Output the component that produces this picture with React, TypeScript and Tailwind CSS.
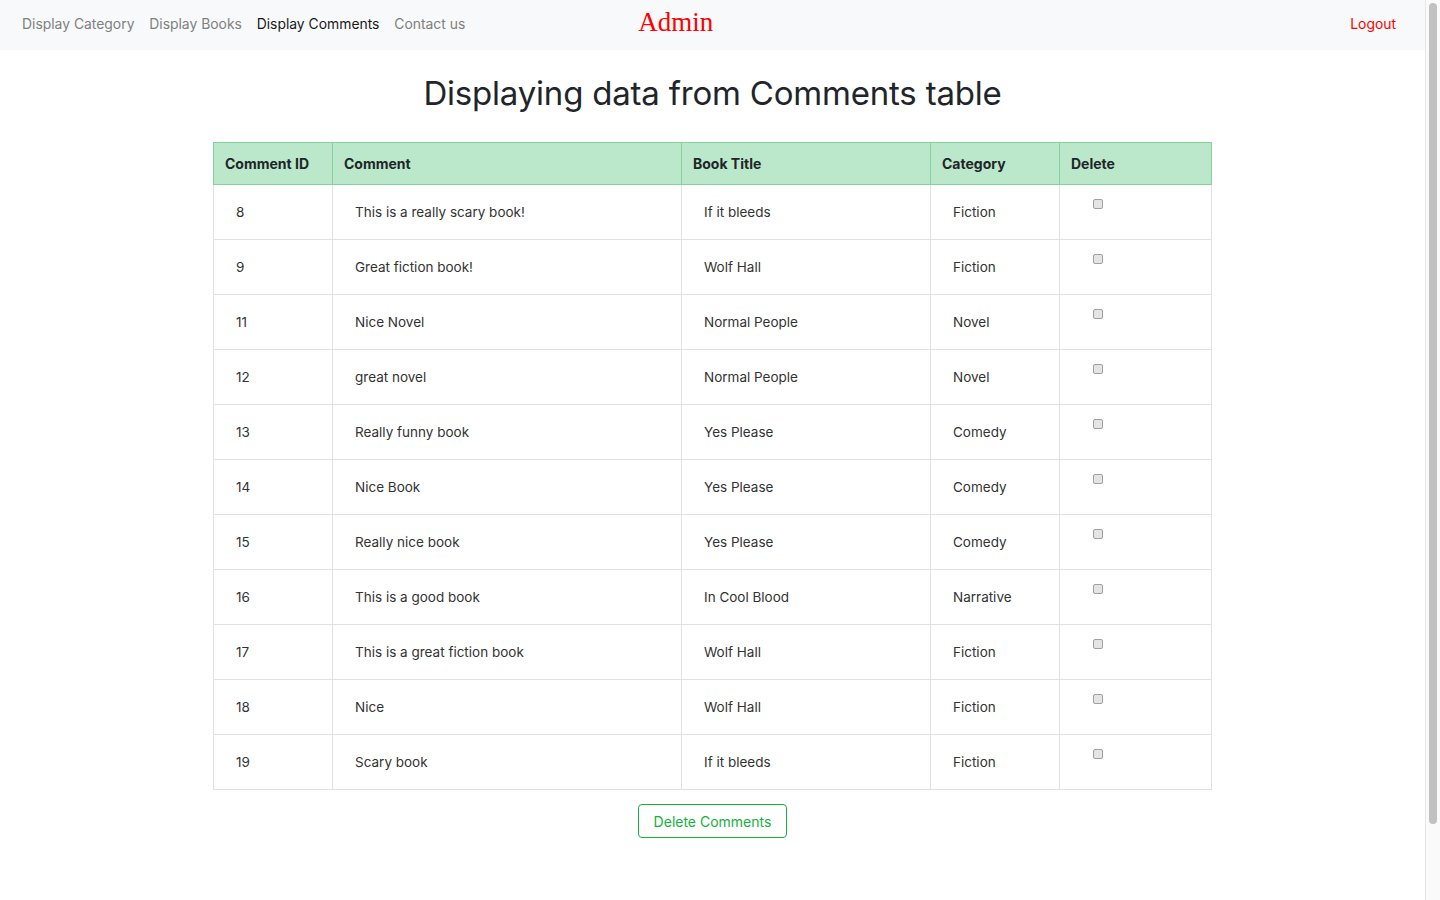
import React from "react";

type Row = {
  id: number;
  comment: string;
  title: string;
  category: string;
};

const rows: Row[] = [
  { id: 8, comment: "This is a really scary book!", title: "If it bleeds", category: "Fiction" },
  { id: 9, comment: "Great fiction book!", title: "Wolf Hall", category: "Fiction" },
  { id: 11, comment: "Nice Novel", title: "Normal People", category: "Novel" },
  { id: 12, comment: "great novel", title: "Normal People", category: "Novel" },
  { id: 13, comment: "Really funny book", title: "Yes Please", category: "Comedy" },
  { id: 14, comment: "Nice Book", title: "Yes Please", category: "Comedy" },
  { id: 15, comment: "Really nice book", title: "Yes Please", category: "Comedy" },
  { id: 16, comment: "This is a good book", title: "In Cool Blood", category: "Narrative" },
  { id: 17, comment: "This is a great fiction book", title: "Wolf Hall", category: "Fiction" },
  { id: 18, comment: "Nice", title: "Wolf Hall", category: "Fiction" },
  { id: 19, comment: "Scary book", title: "If it bleeds", category: "Fiction" },
];

const navLinks = [
  { label: "Display Category", active: false },
  { label: "Display Books", active: false },
  { label: "Display Comments", active: true },
  { label: "Contact us", active: false },
];

export default function App() {
  return (
    <div className="flex h-[900px] w-[1440px] overflow-hidden bg-white font-['Inter','Liberation_Sans',sans-serif] text-[#212529]">
      <div className="min-w-0 flex-1">
        {/* Navbar */}
        <nav className="flex h-[50px] items-center bg-[#f8f9fa] pb-[1px] pl-[22px] pr-[29px] text-[13.9px]">
          <div className="flex items-center gap-[14.8px]">
            {navLinks.map((link) => (
              <a
                key={link.label}
                href="#"
                className={link.active ? "text-[#1a1a1a]" : "text-[#808080]"}
              >
                {link.label}
              </a>
            ))}
          </div>
          <span className="ml-[173px] -mt-[4px] font-['Liberation_Serif',serif] text-[27px] text-[#ff0000]">
            Admin
          </span>
          <a href="#" className="ml-auto text-[#ff0000]">
            Logout
          </a>
        </nav>

        {/* Content */}
        <main className="flex flex-col items-center">
          <h1 className="mt-[20px] text-[33px] font-normal leading-[46px] tracking-[-0.2px] text-[#212529]">
            Displaying data from Comments table
          </h1>

          <table className="mt-[26px] w-[998px] table-fixed border-collapse text-[13.5px]">
            <colgroup>
              <col className="w-[119px]" />
              <col className="w-[349px]" />
              <col className="w-[249px]" />
              <col className="w-[129px]" />
              <col className="w-[152px]" />
            </colgroup>
            <thead>
              <tr className="h-[42px] bg-[#bbe8ca] text-left text-[14px]">
                {["Comment ID", "Comment", "Book Title", "Category", "Delete"].map((h) => (
                  <th
                    key={h}
                    className="border border-[#86d29c] px-[11px] font-bold text-[#212529]"
                  >
                    {h}
                  </th>
                ))}
              </tr>
            </thead>
            <tbody>
              {rows.map((row) => (
                <tr key={row.id} className="h-[55px]">
                  <td className="border border-[#dee2e6] px-[22px] text-[#333]">{row.id}</td>
                  <td className="border border-[#dee2e6] px-[22px] text-[#333]">{row.comment}</td>
                  <td className="border border-[#dee2e6] px-[22px] text-[#333]">{row.title}</td>
                  <td className="border border-[#dee2e6] px-[22px] text-[#333]">{row.category}</td>
                  <td className="border border-[#dee2e6] pl-[33px] pt-[14px] align-top">
                    <span className="block h-[10px] w-[10px] rounded-[2px] border border-[#a0a0a0] bg-[#e4e4e4]" />
                  </td>
                </tr>
              ))}
            </tbody>
          </table>

          <button
            type="button"
            className="mt-[14px] h-[34px] w-[149px] rounded-[4px] border border-[#14b03d] text-[14px] text-[#14b03d]"
          >
            Delete Comments
          </button>
        </main>
      </div>

      {/* Scrollbar */}
      <div className="w-[15px] border-l border-[#e6e6e6] bg-[#fafafa] px-[3px] pt-[3px]">
        <div className="h-[821px] rounded-full bg-[#c1c1c1]" />
      </div>
    </div>
  );
}
